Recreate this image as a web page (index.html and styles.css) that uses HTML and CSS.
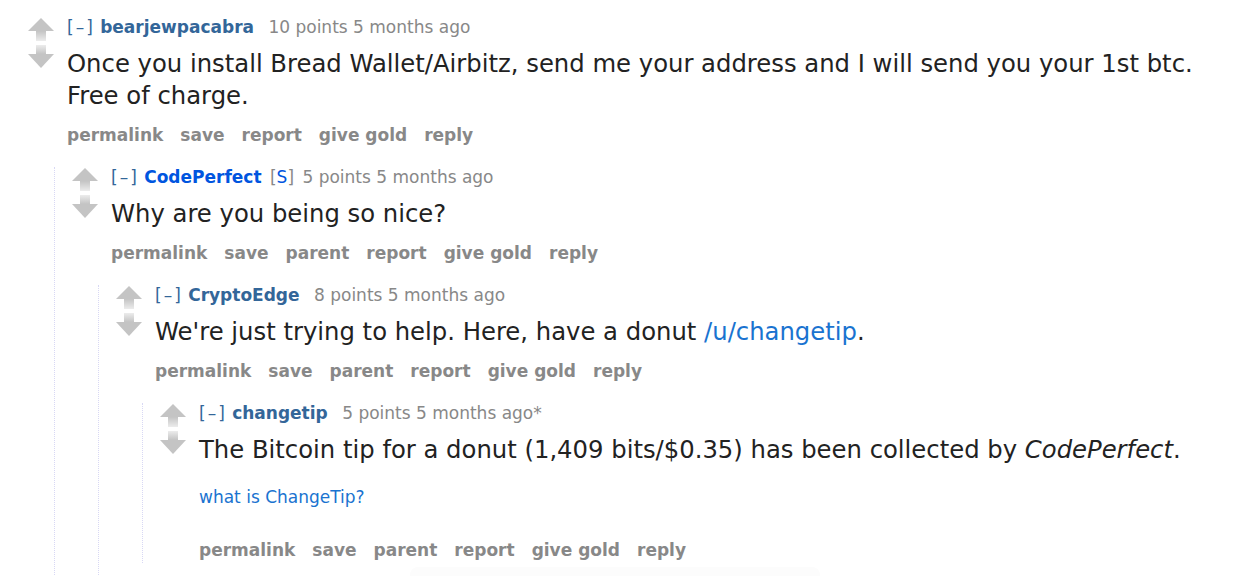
FILE: index.html
```html
<!DOCTYPE html>
<html>
<head>
<meta charset="utf-8">
<link rel="stylesheet" href="styles.css">
</head>
<body>
<div class="thread">
  <div class="comment">
    <div class="row">
      <div class="votes">
        <svg width="26" height="52" viewBox="0 0 26 52"><defs>
          <linearGradient id="gu" x1="0" y1="0" x2="0" y2="1"><stop offset="0" stop-color="#c4c4c4"/><stop offset="1" stop-color="#ececec"/></linearGradient>
          <linearGradient id="gd" x1="0" y1="1" x2="0" y2="0"><stop offset="0" stop-color="#c4c4c4"/><stop offset="1" stop-color="#ececec"/></linearGradient></defs>
          <polygon points="13,0 26,13 0,13" fill="#c4c4c4"/><rect x="8" y="13" width="10" height="10" fill="url(#gu)"/>
          <rect x="8" y="27" width="10" height="9" fill="url(#gd)"/><polygon points="0,36 26,36 13,50" fill="#c4c4c4"/>
        </svg>
      </div>
      <div class="entry">
        <p class="tagline"><span class="expand">[–]</span> <a class="author">bearjewpacabra</a> <span class="score">10 points 5 months ago</span></p>
        <div class="md"><p>Once you install Bread Wallet/Airbitz, send me your address and I will send you your 1st btc. Free of charge.</p></div>
        <ul class="buttons"><li>permalink</li><li>save</li><li>report</li><li>give gold</li><li>reply</li></ul>
      </div>
    </div>
    <div class="child">
      <div class="comment">
        <div class="row">
          <div class="votes">
            <svg width="26" height="52" viewBox="0 0 26 52">
              <polygon points="13,0 26,13 0,13" fill="#c4c4c4"/><rect x="8" y="13" width="10" height="10" fill="url(#gu)"/>
              <rect x="8" y="27" width="10" height="9" fill="url(#gd)"/><polygon points="0,36 26,36 13,50" fill="#c4c4c4"/>
            </svg>
          </div>
          <div class="entry">
            <p class="tagline"><span class="expand">[–]</span> <a class="author submitter">CodePerfect</a> <span class="flag">[<b>S</b>]</span> <span class="score">5 points 5 months ago</span></p>
            <div class="md"><p>Why are you being so nice?</p></div>
            <ul class="buttons"><li>permalink</li><li>save</li><li>parent</li><li>report</li><li>give gold</li><li>reply</li></ul>
          </div>
        </div>
        <div class="child">
          <div class="comment">
            <div class="row">
              <div class="votes">
                <svg width="26" height="52" viewBox="0 0 26 52">
                  <polygon points="13,0 26,13 0,13" fill="#c4c4c4"/><rect x="8" y="13" width="10" height="10" fill="url(#gu)"/>
                  <rect x="8" y="27" width="10" height="9" fill="url(#gd)"/><polygon points="0,36 26,36 13,50" fill="#c4c4c4"/>
                </svg>
              </div>
              <div class="entry">
                <p class="tagline"><span class="expand">[–]</span> <a class="author">CryptoEdge</a> <span class="score">8 points 5 months ago</span></p>
                <div class="md"><p>We're just trying to help. Here, have a donut <a class="link">/u/changetip</a>.</p></div>
                <ul class="buttons"><li>permalink</li><li>save</li><li>parent</li><li>report</li><li>give gold</li><li>reply</li></ul>
              </div>
            </div>
            <div class="child last">
              <div class="comment">
                <div class="row">
                  <div class="votes">
                    <svg width="26" height="52" viewBox="0 0 26 52">
                      <polygon points="13,0 26,13 0,13" fill="#c4c4c4"/><rect x="8" y="13" width="10" height="10" fill="url(#gu)"/>
                      <rect x="8" y="27" width="10" height="9" fill="url(#gd)"/><polygon points="0,36 26,36 13,50" fill="#c4c4c4"/>
                    </svg>
                  </div>
                  <div class="entry">
                    <p class="tagline"><span class="expand">[–]</span> <a class="author">changetip</a> <span class="score">5 points 5 months ago*</span></p>
                    <div class="md"><p>The Bitcoin tip for a donut (1,409 bits/$0.35) has been collected by <em>CodePerfect</em>.</p>
                      <p class="small"><a class="link">what is ChangeTip?</a></p></div>
                    <ul class="buttons tall"><li>permalink</li><li>save</li><li>parent</li><li>report</li><li>give gold</li><li>reply</li></ul>
                  </div>
                </div>
              </div>
            </div>
          </div>
        </div>
      </div>
    </div>
  </div>
</div>
<div class="fade"></div>
</body>
</html>
```

FILE: styles.css
```css
html, body {
  margin: 0;
  padding: 0;
  background: #ffffff;
  overflow: hidden;
}
body {
  height: 576px;
  position: relative;
}
.thread {
  padding: 18px 20px 0 28px;
}
.row {
  display: flex;
  align-items: flex-start;
}
.votes {
  width: 26px;
  flex: none;
  margin-right: 13px;
}
.votes svg {
  display: block;
}
.entry {
  flex: 1;
  min-width: 0;
}
.tagline {
  margin: -1px 0 0 0;
  font-family: "DejaVu Sans", Verdana, sans-serif;
  font-size: 17px;
  line-height: 20px;
  color: #888888;
  white-space: nowrap;
}
.expand {
  color: #336699;
  letter-spacing: 2px;
  margin-right: 0;
}
.author {
  color: #336699;
  font-weight: bold;
  margin-right: 9px;
}
.author.submitter {
  color: #0055df;
  margin-right: 3px;
}
.flag {
  color: #888888;
  margin-right: 3px;
}
.flag b {
  color: #0055df;
  font-weight: normal;
}
.md {
  margin-top: 11px;
  font-family: "DejaVu Sans", Verdana, sans-serif;
  font-size: 24.3px;
  line-height: 32px;
  color: #222222;
}
.md p {
  margin: 0;
}
.md p.small {
  margin-top: 21px;
  font-size: 17px;
  line-height: 20px;
}
.link {
  color: #1a73d0;
}
.buttons {
  list-style: none;
  margin: 13px 0 0 0;
  padding: 0;
  display: flex;
  gap: 17px;
  font-family: "DejaVu Sans", Verdana, sans-serif;
  font-size: 17px;
  line-height: 20px;
  font-weight: bold;
  color: #888888;
}
.buttons.tall {
  margin-top: 33px;
}
.child {
  margin: 22px 0 0 26px;
  padding: 1px 0 600px 17px;
  border-left: 1px dotted #d8d8f4;
}
.child.last {
  padding-bottom: 3px;
}
.fade {
  position: absolute;
  left: 410px;
  top: 567px;
  width: 410px;
  height: 20px;
  border-radius: 8px;
  background: #fcfcfc;
}
```
